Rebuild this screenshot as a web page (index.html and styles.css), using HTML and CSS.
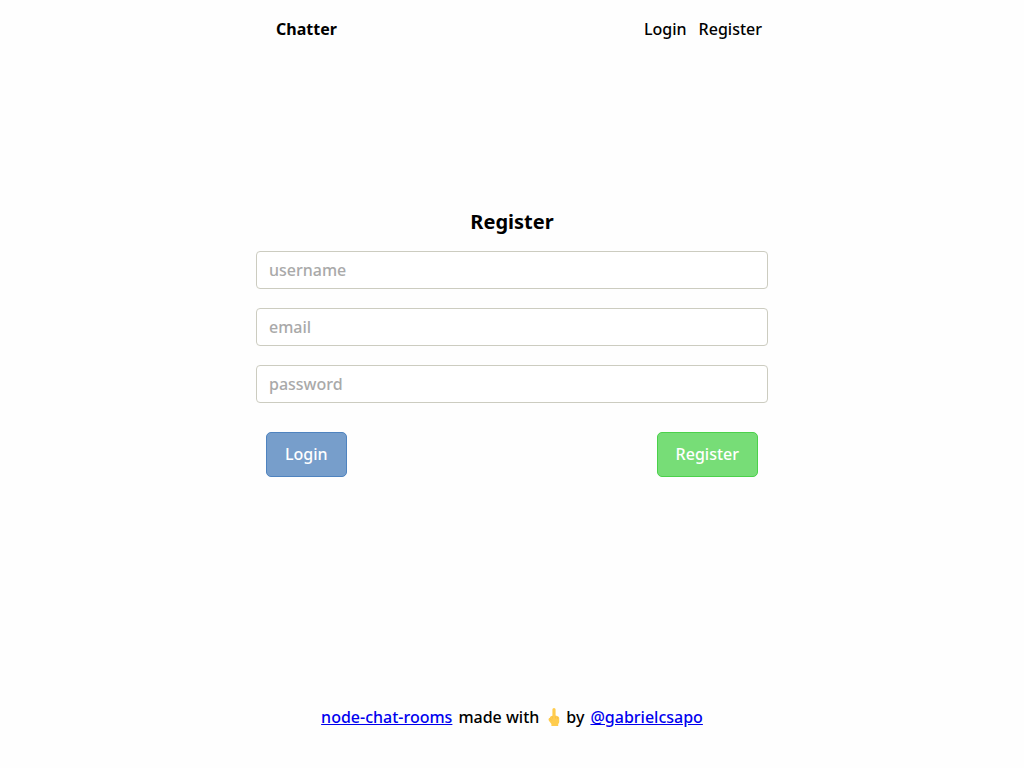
FILE: index.html
```html
<!DOCTYPE html>
<html lang="en">
<head>
  <meta charset="utf-8">
  <meta name="viewport" content="width=device-width, initial-scale=1">
  <title>Chatter</title>
  <link rel="stylesheet" href="styles.css">
</head>
<body class="page">
  <header class="header">
    <strong class="brand">Chatter</strong>
    <nav class="nav">
      <a class="nav-link" href="#login">Login</a>
      <a class="nav-link" href="#register">Register</a>
    </nav>
  </header>
  <main class="main">
    <form class="form">
      <h1 class="title">Register</h1>
      <input class="field" type="text" name="username" placeholder="username" aria-label="username">
      <input class="field" type="email" name="email" placeholder="email" aria-label="email">
      <input class="field" type="password" name="password" placeholder="password" aria-label="password">
      <div class="actions">
        <button class="button button-login" type="button">Login</button>
        <button class="button button-register" type="submit">Register</button>
      </div>
    </form>
  </main>
  <footer class="footer">
    <a class="link" href="#project">node-chat-rooms</a>
    <span>made with</span>
    <svg class="hand" viewBox="0 0 12 18" role="img" aria-label="middle finger">
      <path fill="#ffcc4d" d="M4.4 1.6Q4.4 0 6 0T7.6 1.6V7.6L9.8 8.2Q11.2 8.6 11.2 10V14Q11.2 15.2 10.2 16V18H3.4V16L.9 12.8Q.2 11.6 .8 10.6Q1.2 9.9 2 9.8V9.2Q2.4 8.2 4.4 7.8Z"/>
      <path fill="none" stroke="#f2b544" stroke-width=".6" d="M4.4 8.4V10.6M7.6 8.4V10.6M9.5 9V10.8M2 10.4L3.8 12.6"/>
    </svg>
    <span>by</span>
    <a class="link" href="#author">@gabrielcsapo</a>
  </footer>
</body>
</html>
```
FILE: styles.css
```css
* {
  box-sizing: border-box;
}

.page {
  display: flex;
  flex-direction: column;
  min-height: 100vh;
  margin: 0;
  background: #fefefe;
  color: #000;
  font-family: "Noto Sans", "Open Sans", sans-serif;
  font-size: 16px;
  font-weight: 500;
  line-height: 20px;
}

.header {
  display: flex;
  justify-content: space-between;
  width: 50%;
  margin: 0 auto;
  padding: 19px 6px 19px 20px;
}

.nav {
  display: flex;
  gap: 12px;
}

.nav-link {
  color: inherit;
  text-decoration: none;
}

.main {
  display: flex;
  flex: 1;
  align-items: center;
  justify-content: center;
  padding-bottom: 27px;
}

.form {
  display: flex;
  flex-direction: column;
  gap: 19px;
  width: 50%;
}

.title {
  margin: 0;
  font-size: 20px;
  line-height: 20px;
  text-align: center;
}

.field {
  width: 100%;
  height: 38px;
  padding: 0 12px;
  border: 1px solid #ccccc0;
  border-radius: 4px;
  background: #fff;
  color: #000;
  font: inherit;
}

.field::placeholder {
  color: #a9a9a9;
  opacity: 1;
}

.actions {
  display: flex;
  justify-content: space-between;
  padding: 10px;
}

.button {
  padding: 11px 18px 12px;
  border: 1px solid;
  border-radius: 5px;
  color: #fff;
  font: inherit;
  cursor: pointer;
}

.button-login {
  border-color: #4f83bf;
  background: #779ecb;
}

.button-register {
  border-color: #4bd14b;
  background: #77dd77;
}

.footer {
  display: flex;
  flex-wrap: wrap;
  align-items: center;
  justify-content: center;
  column-gap: 6px;
  padding: 40px 20px 41px;
}

.link {
  color: #00e;
  text-decoration: underline;
}

.hand {
  width: 12px;
  height: 18px;
  margin-left: 3px;
}
```
